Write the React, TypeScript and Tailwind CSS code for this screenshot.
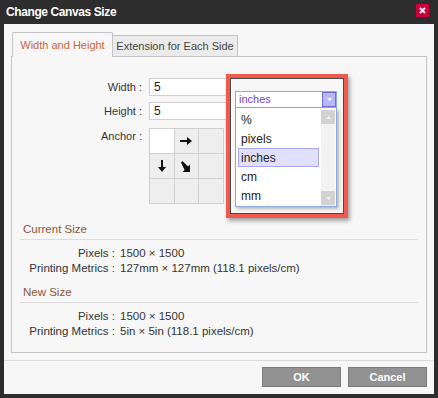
import React from "react";

const font = { fontFamily: '"Liberation Sans", Arial, sans-serif' };

function ArrowRight() {
  return (
    <svg width="12" height="8" viewBox="0 0 12 8">
      <path d="M0 3h7V0l5 4-5 4V5H0z" fill="#111" />
    </svg>
  );
}
function ArrowDown() {
  return (
    <svg width="8" height="12" viewBox="0 0 8 12">
      <path d="M3 0h2v7h3l-4 5-4-5h3z" fill="#111" />
    </svg>
  );
}
function ArrowDiag() {
  return (
    <svg width="11" height="11" viewBox="0 0 11 11">
      <path d="M0 1.4L1.4 0 7 5.6 9 3.6V11H1.6l2-2z" fill="#111" />
    </svg>
  );
}

function Tri({ up, color }: { up?: boolean; color: string }) {
  return (
    <svg width="5" height="3" viewBox="0 0 5 3">
      <path d={up ? "M0 3h5L2.5 0z" : "M0 0h5L2.5 3z"} fill={color} />
    </svg>
  );
}

export default function App() {
  const cells = [0, 1, 2, 3, 4, 5, 6, 7, 8];
  return (
    <div
      className="relative w-[438px] h-[398px] bg-[#2d2d2d] flex flex-col px-[4px] pb-[4px] text-[11px] text-[#333]"
      style={font}
    >
      {/* Title bar */}
      <div className="h-[24px] flex items-center justify-between pl-[2px] pr-[5px]">
        <span className="text-white font-bold text-[12px] leading-none tracking-[-0.4px]">Change Canvas Size</span>
        <div className="w-[13px] h-[13px] bg-[#c8003c] flex items-center justify-center mb-[4px]">
          <svg width="7" height="7" viewBox="0 0 7 7">
            <path d="M1 1l5 5M6 1L1 6" stroke="#fff" strokeWidth="1.8" />
          </svg>
        </div>
      </div>

      {/* Body */}
      <div className="flex-1 bg-[#f7f7f7] flex flex-col">
        <div className="px-[7px] pt-[8px]">
          {/* Tabs */}
          <div className="flex items-end pl-[1px] h-[25px] relative z-10">
            <div className="h-[25px] w-[101px] bg-[#f7f7f7] border border-b-0 border-[#c4c4c4] rounded-t-[2px] flex items-center justify-center text-[#c9643f] text-[11px]">
              Width and Height
            </div>
            <div className="h-[22px] w-[125px] bg-[#ebebeb] border border-l-0 border-[#c4c4c4] flex items-center justify-center text-[11px] text-[#444]">
              Extension for Each Side
            </div>
          </div>
          {/* Panel */}
          <div className="h-[297px] -mt-[1px] border border-[#c4c4c4] bg-[#f7f7f7] flex flex-col">
            <div className="pt-[21px] flex flex-col gap-[6px]">
              <div className="flex items-center">
                <div className="w-[131px] text-right pr-[1px]">Width :</div>
                <div className="ml-[6px] w-[90px] h-[18px] bg-white border border-[#cfcfcf] flex items-center pl-[4px] text-[12px] text-[#222]">5</div>
              </div>
              <div className="flex items-center">
                <div className="w-[131px] text-right pr-[1px]">Height :</div>
                <div className="ml-[6px] w-[90px] h-[18px] bg-white border border-[#cfcfcf] flex items-center pl-[4px] text-[12px] text-[#222]">5</div>
              </div>
              <div className="flex items-start mt-[2px]">
                <div className="w-[131px] text-right pr-[1px]">Anchor :</div>
                <div className="ml-[6px] w-[75px] h-[76px] border border-[#cfcfcf] bg-[#cfcfcf] grid grid-cols-3 grid-rows-3 gap-[1px]">
                  {cells.map((i) => (
                    <div
                      key={i}
                      className={
                        (i === 0 ? "bg-white " : "bg-[#eeeeee] ") +
                        "flex items-center justify-center"
                      }
                    >
                      {i === 1 && <ArrowRight />}
                      {i === 3 && <ArrowDown />}
                      {i === 4 && <ArrowDiag />}
                    </div>
                  ))}
                </div>
              </div>
            </div>

            {/* Current size */}
            <div className="mt-[18px] mx-[8px]">
              <div className="text-[#8a5636] pl-[3px] h-[15px] leading-[15px] text-[11.5px]">Current Size</div>
              <div className="h-[1px] bg-[#dcdcdc] mt-[2px]" />
            </div>
            <div className="mt-[6px] flex flex-col text-[11.5px]">
              <div className="flex h-[15px] items-center">
                <div className="w-[103px] text-right">Pixels :</div>
                <div className="ml-[5px]">1500 × 1500</div>
              </div>
              <div className="flex h-[15px] items-center">
                <div className="w-[103px] text-right">Printing Metrics :</div>
                <div className="ml-[5px]">127mm × 127mm (118.1 pixels/cm)</div>
              </div>
            </div>

            <div className="mt-[9px] mx-[8px]">
              <div className="text-[#8a5636] pl-[3px] h-[15px] leading-[15px] text-[11.5px]">New Size</div>
              <div className="h-[1px] bg-[#dcdcdc] mt-[2px]" />
            </div>
            <div className="mt-[6px] flex flex-col text-[11.5px]">
              <div className="flex h-[15px] items-center">
                <div className="w-[103px] text-right">Pixels :</div>
                <div className="ml-[5px]">1500 × 1500</div>
              </div>
              <div className="flex h-[15px] items-center">
                <div className="w-[103px] text-right">Printing Metrics :</div>
                <div className="ml-[5px]">5in × 5in (118.1 pixels/cm)</div>
              </div>
            </div>
          </div>
        </div>

        {/* Footer */}
        <div className="mt-[7px] h-[1px] bg-[#dcdcdc]" />
        <div className="flex justify-end gap-[7px] pr-[7px] pt-[6px]">
          <div className="w-[79px] h-[20px] bg-[#929292] border border-[#7c7c7c] flex items-center justify-center text-white font-bold text-[11px]">OK</div>
          <div className="w-[79px] h-[20px] bg-[#929292] border border-[#7c7c7c] flex items-center justify-center text-white font-bold text-[11px]">Cancel</div>
        </div>
      </div>

      {/* Red highlight annotation with open dropdown */}
      <div className="absolute left-[226px] top-[74px] w-[122px] h-[144px] border-[4px] border-[#ef5a4c] bg-[#f7f7f7] shadow-[inset_0_0_0_1px_#4a4a4a,2px_3px_4px_rgba(0,0,0,0.35)] pl-[5px] pt-[13px]">
        <div className="w-[102px] h-[17px] bg-white border border-[#8ea8dc] flex items-center justify-between">
          <span className="pl-[3px] text-[#7a3fc4] text-[11px]">inches</span>
          <div className="w-[14px] h-[15px] bg-[#b8b8f6] border border-[#6e6ed8] flex items-center justify-center">
            <Tri color="#ffffff" />
          </div>
        </div>
        <div className="w-[102px] h-[99px] bg-white border border-t-0 border-[#8ea8dc] shadow-[2px_2px_3px_rgba(0,0,0,0.25)] flex pt-[2px] pl-[2px] pr-[1px]">
          <div className="flex-1 flex flex-col text-[12px] text-[#222]">
            <div className="h-[19px] flex items-center pl-[3px]">%</div>
            <div className="h-[19px] flex items-center pl-[3px]">pixels</div>
            <div className="h-[19px] flex items-center pl-[2px] bg-[#e0e0fc] border border-[#a8a8f0]">inches</div>
            <div className="h-[19px] flex items-center pl-[3px]">cm</div>
            <div className="h-[19px] flex items-center pl-[3px]">mm</div>
          </div>
          <div className="w-[14px] ml-[2px] flex flex-col justify-between bg-[#f2f2f2] pb-[1px]">
            <div className="h-[14px] bg-[#d2d2d2] flex items-center justify-center">
              <Tri up color="#f2f2f2" />
            </div>
            <div className="h-[14px] bg-[#d2d2d2] flex items-center justify-center">
              <Tri color="#f2f2f2" />
            </div>
          </div>
        </div>
      </div>
    </div>
  );
}
